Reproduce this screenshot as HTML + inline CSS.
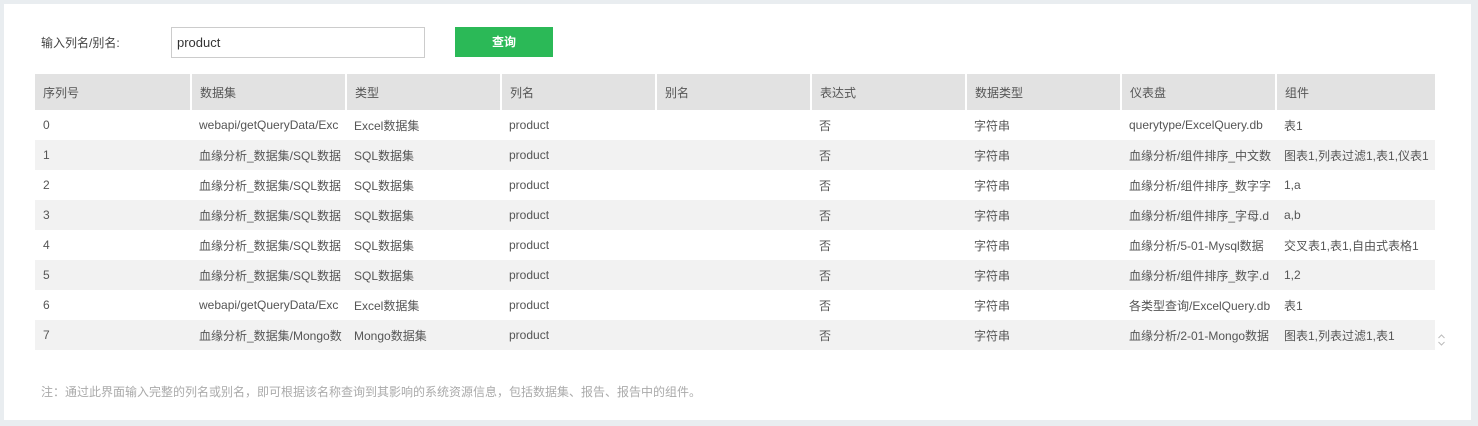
<!DOCTYPE html>
<html><head><meta charset="utf-8"><style>
body{margin:0;width:1478px;height:426px;background:#e9edf0;font-family:"Liberation Sans","Noto Sans CJK SC",sans-serif;font-size:12px;color:#555;overflow:hidden;position:relative}
.panel{position:absolute;left:4px;top:4px;width:1467px;height:416px;background:#fff}
.abs{position:absolute}
.lab{left:41px;top:34px;color:#444}
.inp{left:171px;top:27px;width:251px;height:29px;border:1px solid #ccc;box-sizing:content-box;line-height:29px;padding-left:5px;font-size:13px;color:#333;width:247px}
.btn{left:455px;top:27px;width:98px;height:30px;background:#2bb957;color:#fff;text-align:center;line-height:30px;font-weight:bold}
table{position:absolute;left:35px;top:74px;border-collapse:collapse;table-layout:fixed}
th{background:#e2e2e2;height:36px;text-align:left;font-weight:normal;padding:0 0 0 8px;border-right:2px solid #fff;color:#555;white-space:nowrap;overflow:hidden}
td{height:30px;padding:0 0 0 8px;white-space:nowrap;overflow:hidden;color:#555}
tr.g td{background:#f2f2f2}
.note{left:41px;top:383px;color:#aaa}
</style></head><body>
<div class="panel"></div>
<div class="abs lab">输入列名/别名:</div>
<div class="abs inp">product</div>
<div class="abs btn">查询</div>
<table>
<colgroup><col style="width:156px"><col style="width:155px"><col style="width:155px"><col style="width:155px"><col style="width:155px"><col style="width:155px"><col style="width:155px"><col style="width:155px"><col style="width:159px"></colgroup>
<tr><th>序列号</th><th>数据集</th><th>类型</th><th>列名</th><th>别名</th><th>表达式</th><th>数据类型</th><th>仪表盘</th><th style="border-right:0">组件</th></tr>
<tr><td>0</td><td>webapi/getQueryData/Exc</td><td>Excel数据集</td><td>product</td><td></td><td>否</td><td>字符串</td><td>querytype/ExcelQuery.db</td><td>表1</td></tr>
<tr class="g"><td>1</td><td>血缘分析_数据集/SQL数据</td><td>SQL数据集</td><td>product</td><td></td><td>否</td><td>字符串</td><td>血缘分析/组件排序_中文数</td><td>图表1,列表过滤1,表1,仪表1</td></tr>
<tr><td>2</td><td>血缘分析_数据集/SQL数据</td><td>SQL数据集</td><td>product</td><td></td><td>否</td><td>字符串</td><td>血缘分析/组件排序_数字字</td><td>1,a</td></tr>
<tr class="g"><td>3</td><td>血缘分析_数据集/SQL数据</td><td>SQL数据集</td><td>product</td><td></td><td>否</td><td>字符串</td><td>血缘分析/组件排序_字母.d</td><td>a,b</td></tr>
<tr><td>4</td><td>血缘分析_数据集/SQL数据</td><td>SQL数据集</td><td>product</td><td></td><td>否</td><td>字符串</td><td>血缘分析/5-01-Mysql数据</td><td>交叉表1,表1,自由式表格1</td></tr>
<tr class="g"><td>5</td><td>血缘分析_数据集/SQL数据</td><td>SQL数据集</td><td>product</td><td></td><td>否</td><td>字符串</td><td>血缘分析/组件排序_数字.d</td><td>1,2</td></tr>
<tr><td>6</td><td>webapi/getQueryData/Exc</td><td>Excel数据集</td><td>product</td><td></td><td>否</td><td>字符串</td><td>各类型查询/ExcelQuery.db</td><td>表1</td></tr>
<tr class="g"><td>7</td><td>血缘分析_数据集/Mongo数</td><td>Mongo数据集</td><td>product</td><td></td><td>否</td><td>字符串</td><td>血缘分析/2-01-Mongo数据</td><td>图表1,列表过滤1,表1</td></tr>
</table>
<svg class="abs" style="left:1437px;top:333px" width="9" height="14"><path d="M1.5 5 L4.5 2 L7.5 5 M1.5 9 L4.5 12 L7.5 9" stroke="#bbb" fill="none"/></svg>
<div class="abs note">注：通过此界面输入完整的列名或别名，即可根据该名称查询到其影响的系统资源信息，包括数据集、报告、报告中的组件。</div>
</body></html>
